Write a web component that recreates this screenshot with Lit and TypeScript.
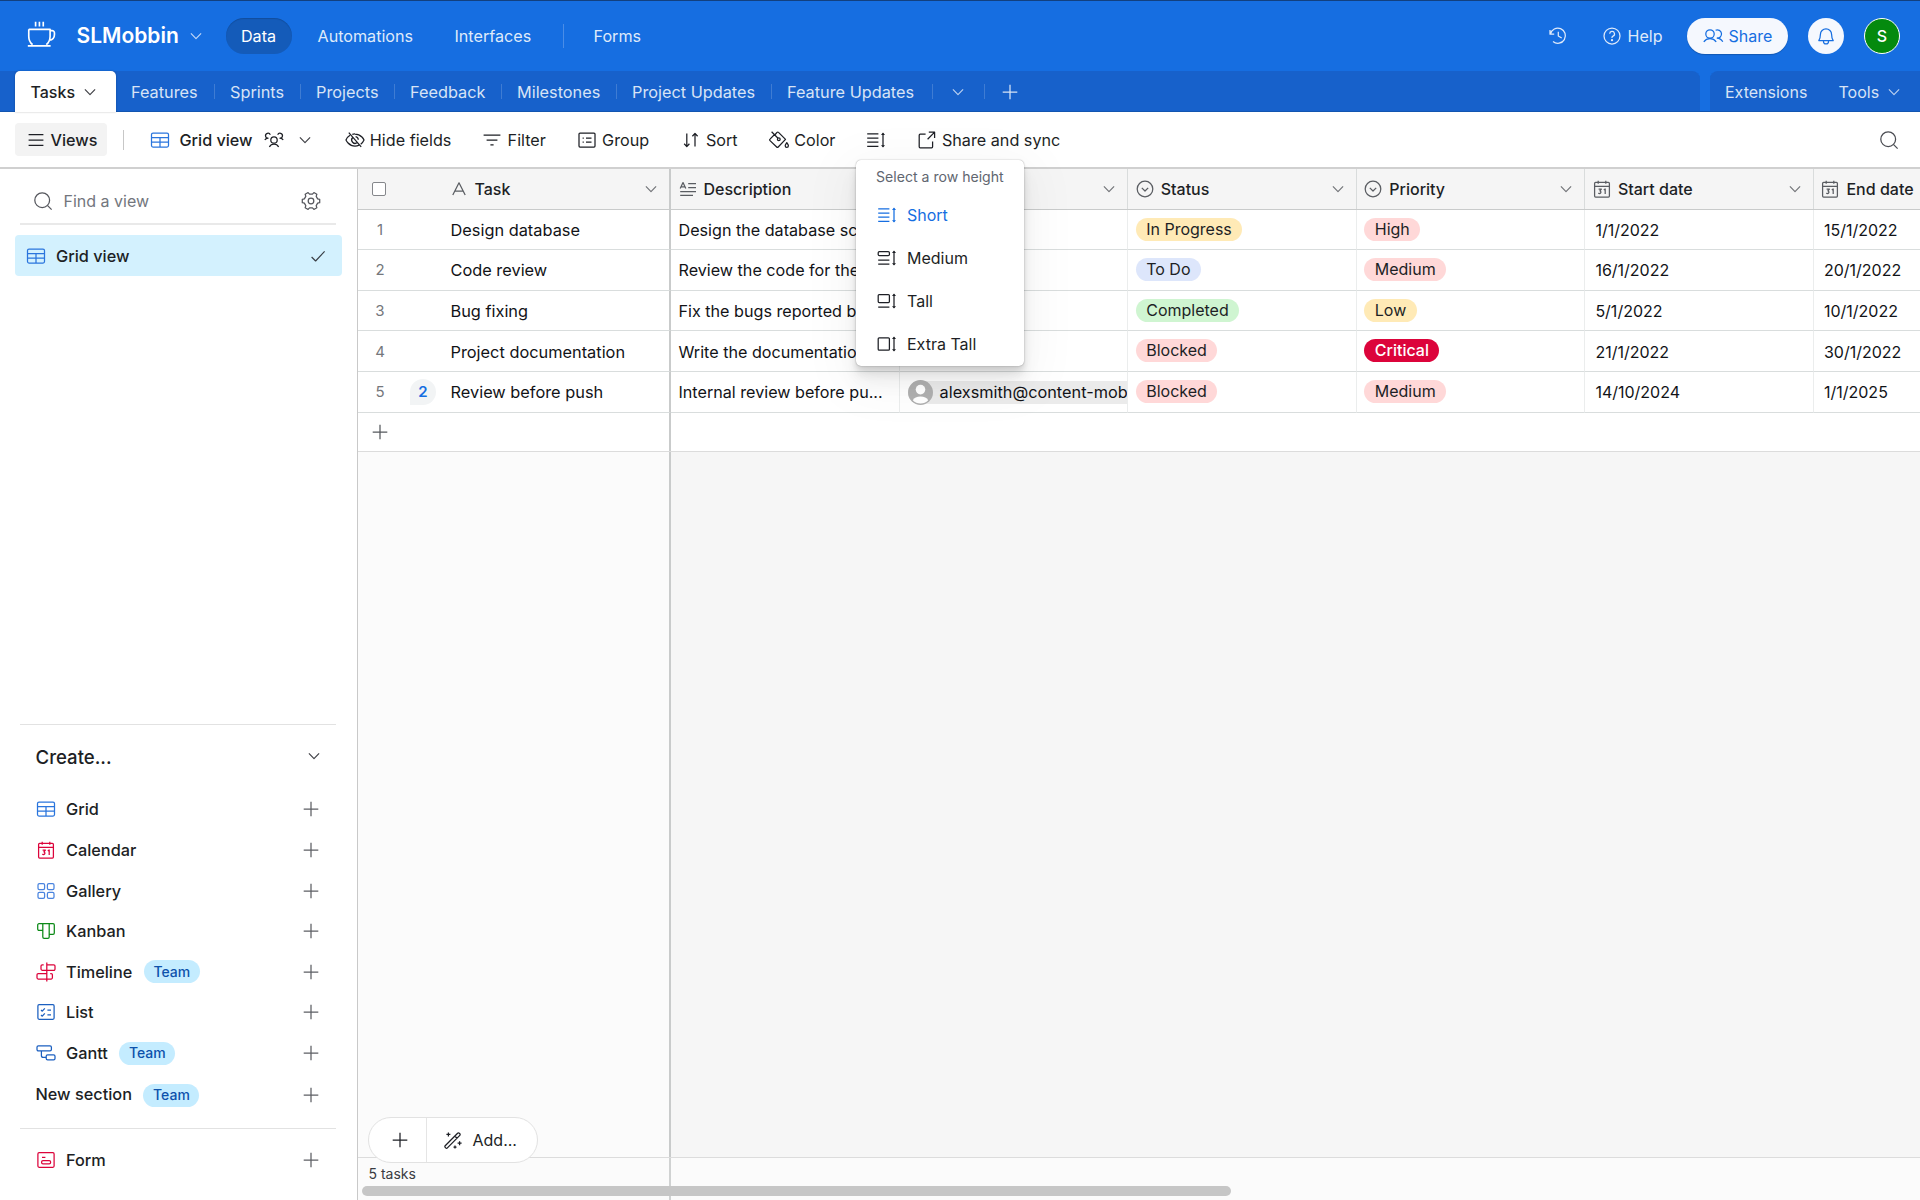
import { LitElement, html, css, svg, nothing } from "lit";
import { customElement } from "lit/decorators.js";

const glyphs: Record<string, unknown> = {
  cup: svg`<path d="M1.700 9h20.600v6.600c0 3.600-1 6-3.700 8.200M1.700 9v6.600c0 3.600 1 6 3.700 8.200M22.300 10.200h1.900a2.300 2.300 0 0 1 2.300 2.300v1.400c0 3-2 5.200-5 5.600M.8 25h22M8.300 1.800v4.500M12 1.800v4.500M15.700 1.800v4.500"/>`,
  chev: svg`<path d="M4.900 7.300 10 12.600l5.100-5.300"/>`,
  plus: svg`<path d="M10 2.700v14.600M2.700 10h14.600"/>`,
  history: svg`<path d="M2 4v4.200h4.200M2.400 8A7.600 7.600 0 1 1 5 15.600M10.300 5.800V10l3.400 2"/>`,
  help: svg`<circle cx="10" cy="10" r="8"/><path d="M7.700 7.800a2.400 2.400 0 1 1 3.300 2.300c-.7.3-1 .7-1 1.400v.4"/><circle cx="10" cy="14.200" r=".5" fill="currentColor"/>`,
  share: svg`<circle cx="7" cy="8" r="4.200"/><path d="M.8 15.800a7.600 7.600 0 0 1 12.400 0M12.600 4.200a4.200 4.200 0 1 1 1.200 8M13.800 12.200a7.400 7.400 0 0 1 6 3.600"/>`,
  bell: svg`<path d="M4.400 8.400a5.600 5.600 0 0 1 11.200 0c0 3 .7 4.700 1.600 6.200H2.800c.9-1.500 1.600-3.200 1.600-6.200zM7.500 14.800v.6a2.500 2.500 0 0 0 5 0v-.6"/>`,
  lines: svg`<path d="M2.600 4.600h14.800M2.600 10h14.800M2.600 15.400h14.800"/>`,
  grid: svg`<rect x="1.500" y="3" width="17" height="14" rx="1.500"/><path d="M1.500 7.500h17M1.500 12.200h17M10 7.500V17"/>`,
  people: svg`<circle cx="10" cy="10" r="3.200"/><path d="M5.400 17a5.200 5.200 0 0 1 9.200 0M.8 10a4 4 0 0 1 3.200-1.800 2.500 2.500 0 1 1 2.300-3.500M19.200 10A4 4 0 0 0 16 8.200a2.500 2.500 0 1 0-2.300-3.500"/>`,
  hide: svg`<path d="M3.800 2.600l12.400 14.200M7.300 4.300A9.500 9.500 0 0 1 10 4c6.500 0 9 6 9 6a11 11 0 0 1-3.300 4.300M5 5.300C2.200 7.100 1 10 1 10s2.500 6 9 6c1.500 0 2.800-.3 4-.9M12.300 12.500A3.400 3.400 0 0 1 7.700 7.500M10.600 6.700a3.300 3.300 0 0 1 2.700 3"/>`,
  filter: svg`<path d="M1.600 5.200h16.800M4.600 10h10.800M8.400 14.800h3.200"/>`,
  group: svg`<rect x="2" y="3" width="16" height="14" rx="1"/><path d="M9 8h5.500M9 12h5.500M5.600 8h1.200M5.600 12h1.200"/>`,
  sort: svg`<path d="M5.800 3.400v13M3.200 13.800l2.600 2.800 2.600-2.800M14 16.600V3.600M11.400 6.200 14 3.400l2.600 2.800"/>`,
  color: svg`<path d="M2.600 1.800l6.400 6.400M5.800 5 8 2.400a1 1 0 0 1 1.500 0l7 7-7.300 7.600a1 1 0 0 1-1.500 0L1 10.600a1 1 0 0 1 0-1.500l4.800-4.800"/><circle cx="9.800" cy="9.200" r="1.400"/><path d="M17.800 12.700c1 1.500 1.600 2.200 1.600 3.100a1.600 1.600 0 0 1-3.200 0c0-.9.600-1.600 1.600-3.100z"/>`,
  open: svg`<path d="M8.600 4.200H3.200a1 1 0 0 0-1 1v11.600a1 1 0 0 0 1 1h11.400a1 1 0 0 0 1-1v-5.400M11.800 2.200h5.800v5.800M17.400 2.400l-6.800 6.800"/>`,
  short: svg`<path d="M1.200 3.800h11.200M1.200 8h11.200M1.200 12.200h11.200M1.200 16.400h11.200M17 3.600v13"/><path d="M17 2.600 15 5h4zM17 17.600l-2-2.400h4z" fill="currentColor" stroke="none"/>`,
  medium: svg`<rect x="1.200" y="3.600" width="11.200" height="4" rx="1.200"/><path d="M1.200 12h11.200M1.200 16.200h11.200M17 3.600v13"/><path d="M17 2.600 15 5h4zM17 17.600l-2-2.400h4z" fill="currentColor" stroke="none"/>`,
  tall: svg`<rect x="1.200" y="3.600" width="11.200" height="8" rx="1"/><path d="M1.200 16.200h11.200M17 3.600v13"/><path d="M17 2.600 15 5h4zM17 17.600l-2-2.400h4z" fill="currentColor" stroke="none"/>`,
  xtall: svg`<rect x="1.200" y="3.800" width="11.200" height="12.400" rx="1"/><path d="M17 3.600v13"/><path d="M17 2.600 15 5h4zM17 17.600l-2-2.400h4z" fill="currentColor" stroke="none"/>`,
  search: svg`<circle cx="9.200" cy="9.200" r="7.400"/><path d="M14.600 14.600l4 4"/>`,
  gear: svg`<circle cx="10" cy="10" r="2.800"/><path d="M16.660 7.840 18.700 8.300v3.400l-2.040.46L15.200 14.680l.64 2.040-2.940 1.700-1.440-1.570h-2.920L7.100 18.420l-2.940-1.700.64-2.040L3.340 12.160 1.300 11.700V8.300l2.040-.46L4.800 5.320l-.64-2.040L7.100 1.580l1.440 1.570h2.920L12.900 1.580l2.940 1.700-.64 2.040z"/>`,
  check: svg`<path d="M3.600 11l4 4 9-9.600"/>`,
  cal: svg`<rect x="2.600" y="3.400" width="14.800" height="14.600" rx="1"/><path d="M2.600 7.400h14.800M6.200 1.800v3M13.800 1.800v3"/><path d="M6.600 10h2.800l-1.500 1.800a1.400 1.400 0 1 1-1.500 2.200M11.800 10.900l1.400-.9v5"/>`,
  gallery: svg`<rect x="2" y="2.600" width="6.600" height="6" rx="1.400"/><rect x="11.400" y="2.600" width="6.600" height="6" rx="1.400"/><rect x="2" y="11.400" width="6.600" height="6" rx="1.400"/><rect x="11.400" y="11.400" width="6.600" height="6" rx="1.400"/>`,
  kanban: svg`<path d="M6.800 9.400H3a1.300 1.300 0 0 1-1.300-1.300V4A1.300 1.300 0 0 1 3 2.700h14A1.300 1.300 0 0 1 18.300 4v8a1.300 1.300 0 0 1-1.300 1.300h-3.800M6.800 2.700V16A1.300 1.300 0 0 0 8.100 17.300h3.800a1.300 1.300 0 0 0 1.300-1.300V2.700"/>`,
  timeline: svg`<path d="M10.800.4v19.200M10.800 2.900h7a1.200 1.200 0 0 1 1.200 1.200v3a1.200 1.200 0 0 1-1.200 1.200H6.200A1.200 1.200 0 0 1 5 7.100v-3a1.200 1.200 0 0 1 1.200-1.200h1.500M10.800 11.600H2.200A1.200 1.200 0 0 0 1 12.800v3A1.200 1.200 0 0 0 2.200 17h13a1.200 1.200 0 0 0 1.200-1.200v-3a1.200 1.200 0 0 0-1.200-1.200h-1"/>`,
  list: svg`<rect x="1.900" y="2.700" width="16.200" height="14.600" rx="1.200"/><path d="M5 8l1.300 1.200L8.800 6.400M5 13l1.300 1.200 2.500-2.800M11.400 8h3.600M11.400 12.800h3.600"/>`,
  gantt: svg`<rect x="1" y="2.900" width="14.400" height="5" rx="1.400"/><rect x="10.200" y="11.900" width="8.800" height="5" rx="1.400"/><path d="M5.400 7.900v4.500a2 2 0 0 0 2 2h2.800"/>`,
  form: svg`<rect x="1.900" y="2.700" width="16.200" height="14.600" rx="1.200"/><rect x="5.600" y="10.600" width="9" height="3.200" rx="1.400"/><path d="M6 7.400h3.400"/>`,
  text: svg`<path d="M3.800 16 10 3.800 16.200 16M5.900 12h8.200"/>`,
  long: svg`<path d="M2.200 9.400 5 3.600l2.800 5.800M3 7.800h4M10.200 4.600h7.800M10.200 8.600h7.800M2.200 12.600h15.800M2.200 16.400h12.800"/>`,
  select: svg`<circle cx="10" cy="10" r="7.800"/><path d="M6.800 8.900 10 12l3.200-3.100"/>`,
  wand: svg`<path d="M2.200 15.700 14.600 3.200a1.200 1.200 0 0 1 1.700 0l.5.500a1.200 1.200 0 0 1 0 1.700L4.400 17.900a1.200 1.200 0 0 1-1.700 0l-.5-.5a1.200 1.200 0 0 1 0-1.700zM11.800 6l2.200 2.200M5.400 2.400v4M3.400 4.400h4M16.600 11.200v4M14.600 13.200h4M12 15.600v3M10.500 17.100h3"/>`,
};

const icon = (name: string, cls = "") => {
  const big = name === "cup";
  return html`<svg class="ic ${cls} ${name === "chev" ? "thin" : ""}" viewBox=${big ? "0 0 28 28" : "0 0 20 20"} aria-hidden="true">${glyphs[name]}</svg>`;
};

const TABS = ["Features", "Sprints", "Projects", "Feedback", "Milestones", "Project Updates", "Feature Updates"];
const ROWS = [
  ["Design database", "Design the database schema", "In Progress", "yellow", "High", "red", "1/1/2022", "15/1/2022"],
  ["Code review", "Review the code for the app", "To Do", "blue", "Medium", "red", "16/1/2022", "20/1/2022"],
  ["Bug fixing", "Fix the bugs reported by QA", "Completed", "green", "Low", "yellow", "5/1/2022", "10/1/2022"],
  ["Project documentation", "Write the documentation", "Blocked", "red", "Critical", "crimson", "21/1/2022", "30/1/2022"],
  ["Review before push", "Internal review before pu...", "Blocked", "red", "Medium", "red", "14/10/2024", "1/1/2025"],
];
const CREATE: [string, string, string, boolean][] = [
  ["grid", "Grid", "c-blue", false],
  ["cal", "Calendar", "c-red", false],
  ["gallery", "Gallery", "c-blue2", false],
  ["kanban", "Kanban", "c-green", false],
  ["timeline", "Timeline", "c-red", true],
  ["list", "List", "c-navy", false],
  ["gantt", "Gantt", "c-navy", true],
];
const HEIGHTS = [["short", "Short"], ["medium", "Medium"], ["tall", "Tall"], ["xtall", "Extra Tall"]];

@customElement("app-root")
export class AppRoot extends LitElement {
  static styles = css`
    :host { display: block; width: 1920px; height: 1200px; overflow: hidden; background: #fff; color: #1d1f25;
      font-family: Inter, "Liberation Sans", sans-serif; font-size: 16px; line-height: 20px; }
    * { box-sizing: border-box; }
    span { white-space: nowrap; }
    .ic { width: 20px; height: 20px; flex: none; display: block; fill: none; stroke: currentColor; stroke-width: 1.250; stroke-linejoin: round; overflow: visible; }
    .thin { stroke-width: 1.150; opacity: .85; }
    .page { position: relative; display: flex; flex-direction: column; height: 1200px; }
    .row { display: flex; align-items: center; }

    .top { height: 71px; background: #166ee1; border-top: 1px solid #12407f; color: #dfeafa; padding-right: 20px; padding-left: 27px; }
    .cup { width: 29px; height: 29px; color: #fff; stroke-width: 1.6; margin-top: -3px; }
    .brand { width: 109px; margin-left: 20.500px; color: #fff; font-size: 21px; font-weight: 600; }
    .nav { display: grid; align-items: center; grid-template-columns: 92px 137px 108px 31px 60px; margin-left: 20px; font-size: 16.150px; }
    .pill { width: 66px; height: 36px; border-radius: 18px; background: #145bb9; color: #fff; display: flex; align-items: center; justify-content: center; box-shadow: inset 0 1px 1px rgba(0,0,0,.15); }
    .vsep { width: 1px; height: 24px; background: #4a8de7; }
    .right { margin-left: auto; }
    .help { margin: 0 24.500px 0 34px; gap: 6px; }
    .sharebtn { width: 101px; height: 36px; border-radius: 18px; background: #f5f8fe; color: #166ee1; padding-left: 15.500px; gap: 6px; box-shadow: 0 1px 1px rgba(0,0,0,.2); }
    .bell { width: 36px; height: 36px; border-radius: 18px; background: #f5f8fe; color: #166ee1; justify-content: center; margin: 0 20px; }
    .me { width: 36px; height: 36px; border-radius: 18px; background: #048a0e; border: 1.5px solid #fff; color: #fff; justify-content: center; font-weight: 500; }

    .tabs { height: 41px; background: #166ee1; gap: 10px; box-shadow: inset 0 -1px 0 #1154ae; }
    .tabbar { width: 1700px; height: 41px; background: #1761cb; border-top-right-radius: 8px; color: #d8e4f6; padding-left: 15px; box-shadow: inset 0 -1px 0 #1255b0; }
    .tab { width: 101px; height: 41px; background: #fff; border-radius: 5px 5px 0 0; color: #1d1f25; padding-left: 15.500px; gap: 5px; font-weight: 450; box-shadow: 0 0 2px rgba(0,0,0,.3); }
    .tablist { display: grid; align-items: center; padding-left: 15px; font-size: 16.300px;
      grid-template-columns: 84px 86px 94px 107px 115px 155px 160.500px 52.500px 40px; }
    .tablist > .row { height: 15px; border-right: 1px solid #3f7cd3; }
    .tablist > .row:last-child { border: 0; }
    .tablist .first { padding-left: 0; }
    .t2 { padding-left: 15px; }
    .ext { width: 210px; height: 41px; background: #1761cb; border-top-left-radius: 8px; color: #d8e4f6; padding-left: 15px; box-shadow: inset 0 -1px 0 #1255b0; }
    .ext span:first-child { width: 113.500px; }
    .ext span:nth-child(2) { width: 45.500px; }

    .tools { height: 57px; border-bottom: 2px solid #d0d0d0; padding: 0 21px 0 15px; font-size: 16.200px; }
    .tools > .right { color: #4a4c52; }
    .views { width: 92px; height: 33px; background: #f3f3f3; border-radius: 4px; padding-left: 10.500px; gap: 5px; font-weight: 500; }
    .tsep { width: 1px; height: 20px; background: #c7c7c7; margin: 0 25.500px 0 16px; }
    .bar { display: grid; grid-template-columns: 195px 137.800px 94.500px 103.800px 88.300px 97.200px 50.500px 160px; align-items: center; }
    .tool { gap: 5.300px; }
    .gv { font-weight: 500; }
    .gv span { width: 74px; margin: 0 10px; }
    .gv .ic:last-child { margin-left: 11px; }

    .body { display: flex; flex: 1; min-height: 0; }
    .side { width: 357px; border-right: 1px solid #c9c9c9; box-sizing: content-box; display: flex; flex-direction: column; }
    .find { height: 56px; margin: 0 20px; border-bottom: 2px solid #e9e9e9; color: #73767d; padding: 10px 0 0 13px; width: 316px; }
    .find .ic { color: #55575d; }
    .find span { margin-left: 10.500px; flex: 1; }
    .find .ic:last-child { margin-right: 15px; }
    .current { height: 41px; width: 327px; margin: 10px 0 0 15px; border-radius: 4px; background: #d3f1fe; padding: 0 14px 0 10.500px; font-weight: 500; font-size: 16.300px; }
    .current span { margin-left: 10.500px; flex: 1; }
    .create { margin-top: auto; height: 476px; display: flex; flex-direction: column; }
    .rule { height: 1px; background: #e2e2e2; margin-left: 20px; width: 316px; flex: none; }
    .rule.r2 { margin-top: 13.500px; margin-bottom: 11px; }
    .ctitle { height: 64px; padding: 0 33px 0 35.500px; justify-content: space-between; font-size: 18.600px; font-weight: 500; }
    .ctitle .ic { margin-top: -3px; }
    .citem { height: 40.640px; padding: 0 36px; font-weight: 500; font-size: 16.300px; flex: none; }
    .citem > span { margin-left: 10px; }
    .citem .plus { margin-left: auto; color: #5d5f64; }
    .citem .team { margin-left: 11.500px; height: 23px; width: 56px; border-radius: 12px; background: #c4ecff; color: #0d52ac; font-size: 14px; display: flex; align-items: center; justify-content: center; }
    .citem > .nosec { margin-left: -.5px; margin-top: 0; }
    .citem > .nosec + .team { margin-top: 3px; }
    .citem > .nosec ~ .plus { margin-top: 2px; }
    .c-blue { color: #2a75dd; } .c-blue2 { color: #4a84df; } .c-red { color: #dc043b; } .c-green { color: #0c8a17; } .c-navy { color: #1b5fc0; }

    .main { flex: 1; min-width: 0; display: flex; flex-direction: column; position: relative; }
    .hdr, .drow { display: grid; grid-template-columns: 313px repeat(6, 228.600px); grid-template-rows: 100%; flex: none; }
    .hdr { height: 40.500px; background: #f5f5f5; border-bottom: 1.500px solid #c9cbcb; font-weight: 450; }
    .hdr > div { border-right: 1px solid #d9dcdc; display: flex; align-items: center; padding: 0 8px 0 6.500px; min-width: 0; }
    .hdr > div > span { flex: 1; margin-left: 6px; }
    .hdr .ic { color: #5a5d62; }
    .hdr > div.h1 { padding-left: 14px; border-right: 2px solid #c9cbcb; }
    .hdr > div.h1 > span { margin-left: 5.500px; }
    .box { width: 14px; height: 14px; border: 1.300px solid #85878b; border-radius: 2px; background: #fff; margin-right: 63px; }
    .drow { height: 40.640px; background: #fff; font-size: 16.150px; }
    .drow > div { border-bottom: 1px solid #d9dddd; border-right: 1px solid #ebeded; display: flex; align-items: center; padding-left: 7.500px; padding-top: 1px; min-width: 0; overflow: hidden; color: #121317; }
    .drow > div.first { padding-left: 0; border-right: 2px solid #c9cbcb; font-size: 16.350px; }
    .num { width: 44px; text-align: center; color: #75777c; font-size: 15px; }
    .cnt { width: 26px; height: 26px; margin: 0 14.500px 0 8px; }
    .cnt.on { background: #f2f4f5; border-radius: 13px 13px 13px 0; color: #166ee1; font-weight: 600; font-size: 15px; display: flex; align-items: center; justify-content: center; }
    .drow > .date { padding-left: 10px; font-size: 16px; }
    .tag { height: 23px; border-radius: 12px; padding: 0 10.500px; line-height: 23px; margin-top: -1.500px; color: #1d1f25; font-size: 16px; }
    .yellow { background: #ffeab6; } .blue { background: #dde6fb; } .green { background: #cff5d1; } .red { background: #ffd8d8; }
    .crimson { background: #dc043b; color: #fff; font-weight: 450; }
    .who { height: 23px; background: #ebebeb; margin-left: 1px; border-radius: 12px 0 0 12px; display: flex; align-items: center; width: 230px; font-size: 16.300px; }
    .face { width: 25px; height: 25px; flex: none; margin-right: 6.500px; }
    .addrow { height: 39.200px; display: grid; grid-template-columns: 313px 1fr; background: #fff; border-bottom: 1px solid #dcdcdc; flex: none; }
    .addrow > div:first-child { border-right: 2px solid #c9cbcb; padding: 0 0 0 12px; display: flex; align-items: center; color: #55585d; }
    .void { flex: 1; display: grid; grid-template-columns: 313px 1fr; background: #f6f6f6; }
    .void > div:first-child { background: #fbfbfb; border-right: 2px solid #c9cbcb; }
    .foot { height: 43px; border-top: 1px solid #dcdcdc; background: #fbfbfb; display: grid; grid-template-columns: 313px 1fr; grid-template-rows: 100%; }
    .foot > div { border-right: 2px solid #d0d2d2; padding: 6px 0 0 10.500px; font-size: 14px; color: #3a3c42; }
    .scroll { position: absolute; left: 4px; bottom: 4px; width: 869px; height: 10px; border-radius: 5px; background: #c6c6c6; }
    .fab { position: absolute; left: 10px; bottom: 37px; width: 170px; height: 46px; border-radius: 23px; background: #fff; border: 1.500px solid #e2e2e2; }
    .fab > div { height: 100%; display: flex; align-items: center; }
    .fab > div:first-child { width: 57.500px; border-right: 1.500px solid #e5e5e5; padding-left: 20.500px; }
    .fab > div:last-child { padding-left: 16px; gap: 10px; }

    .pop { position: absolute; left: 856px; top: 160px; width: 168px; height: 206px; background: #fff; border-radius: 5px;
      box-shadow: 0 0 1px rgba(0,0,0,.3), 0 0 2px rgba(0,0,0,.16), 0 4px 5px rgba(0,0,0,.07), 0 8px 10px rgba(0,0,0,.07), 0 15px 20px rgba(0,0,0,.06), 0 12px 50px 14px rgba(0,0,0,.035);
      display: flex; flex-direction: column; }
    .ptitle { font-size: 14.100px; color: #616670; padding: 7px 0 0 20px; height: 33.500px; }
    .opt { height: 43.200px; padding-left: 20.500px; gap: 10.500px; }
    .opt.sel { color: #166ee1; }
  `;

  render() {
    return html`<div class="page">
      <div class="top row">
        ${icon("cup", "cup")}<span class="brand">SLMobbin</span>${icon("chev")}
        <div class="nav">
          <span class="pill">Data</span><span>Automations</span><span>Interfaces</span><i class="vsep"></i><span>Forms</span>
        </div>
        <div class="right row">
          ${icon("history")}
          <div class="help row">${icon("help")}<span>Help</span></div>
          <div class="sharebtn row">${icon("share")}<span>Share</span></div>
          <div class="bell row">${icon("bell")}</div>
          <div class="me row">S</div>
        </div>
      </div>
      <div class="tabs row">
        <div class="tabbar row">
          <div class="tab row"><span>Tasks</span>${icon("chev")}</div>
          <div class="tablist">
            ${TABS.map((t, i) => html`<div class="row ${i ? "t2" : "first"}"><span>${t}</span></div>`)}
            <div class="row t2">${icon("chev")}</div>
            <div class="row t2">${icon("plus")}</div>
          </div>
        </div>
        <div class="ext row"><span>Extensions</span><span>Tools</span>${icon("chev")}</div>
      </div>
      <div class="tools row">
        <div class="views row">${icon("lines")}<span>Views</span></div>
        <i class="tsep"></i>
        <div class="bar">
          <div class="gv row">${icon("grid", "c-blue")}<span>Grid view</span>${icon("people")}${icon("chev")}</div>
          <div class="tool row">${icon("hide")}<span>Hide fields</span></div>
          <div class="tool row">${icon("filter")}<span>Filter</span></div>
          <div class="tool row">${icon("group")}<span>Group</span></div>
          <div class="tool row">${icon("sort")}<span>Sort</span></div>
          <div class="tool row">${icon("color")}<span>Color</span></div>
          <div class="tool row">${icon("short")}</div>
          <div class="tool row">${icon("open")}<span>Share and sync</span></div>
        </div>
        <div class="right">${icon("search")}</div>
      </div>
      <div class="body">
        <div class="side">
          <div class="find row">${icon("search")}<span>Find a view</span>${icon("gear")}</div>
          <div class="current row">${icon("grid", "c-blue")}<span>Grid view</span>${icon("check", "thin")}</div>
          <div class="create">
            <div class="rule"></div>
            <div class="ctitle row"><span>Create...</span>${icon("chev")}</div>
            ${CREATE.map(([ic, label, c, team]) => html`<div class="citem row">${icon(ic, c)}<span>${label}</span>${team ? html`<span class="team">Team</span>` : nothing}${icon("plus", "plus")}</div>`)}
            <div class="citem row"><span class="nosec">New section</span><span class="team">Team</span>${icon("plus", "plus")}</div>
            <div class="rule r2"></div>
            <div class="citem form row">${icon("form", "c-red")}<span>Form</span>${icon("plus", "plus")}</div>
          </div>
        </div>
        <div class="main">
          <div class="hdr">
            <div class="h1"><i class="box"></i>${icon("text")}<span>Task</span>${icon("chev")}</div>
            <div>${icon("long")}<span>Description</span></div>
            <div><span></span>${icon("chev")}</div>
            <div>${icon("select")}<span>Status</span>${icon("chev")}</div>
            <div>${icon("select")}<span>Priority</span>${icon("chev")}</div>
            <div>${icon("cal")}<span>Start date</span>${icon("chev")}</div>
            <div>${icon("cal")}<span>End date</span></div>
          </div>
          ${ROWS.map((r, i) => html`<div class="drow">
            <div class="first"><span class="num">${i + 1}</span><span class="cnt ${i === 4 ? "on" : ""}">${i === 4 ? "2" : nothing}</span><span>${r[0]}</span></div>
            <div><span>${r[1]}</span></div>
            <div>${i === 4 ? html`<div class="who"><svg class="face" viewBox="0 0 26 26"><circle cx="13" cy="13" r="13" fill="#b0b0b0"/><circle cx="13" cy="10" r="5" fill="#fff"/><path d="M5 21a8.600 6 0 0 1 16 0 11 11 0 0 1-16 0z" fill="#fff"/></svg><span>alexsmith@content-mobbin.com</span></div>` : nothing}</div>
            <div><span class="tag ${r[3]}">${r[2]}</span></div>
            <div><span class="tag ${r[5]}">${r[4]}</span></div>
            <div class="date"><span>${r[6]}</span></div>
            <div class="date"><span>${r[7]}</span></div>
          </div>`)}
          <div class="addrow"><div>${icon("plus")}</div><div></div></div>
          <div class="void"><div></div><div></div></div>
          <div class="foot"><div><span>5 tasks</span></div></div>
          <div class="scroll"></div>
          <div class="fab row"><div>${icon("plus")}</div><div>${icon("wand")}<span>Add...</span></div></div>
        </div>
      </div>
      <div class="pop">
        <span class="ptitle">Select a row height</span>
        ${HEIGHTS.map(([ic, l], i) => html`<div class="opt row ${i ? "" : "sel"}">${icon(ic)}<span>${l}</span></div>`)}
      </div>
    </div>`;
  }
}
